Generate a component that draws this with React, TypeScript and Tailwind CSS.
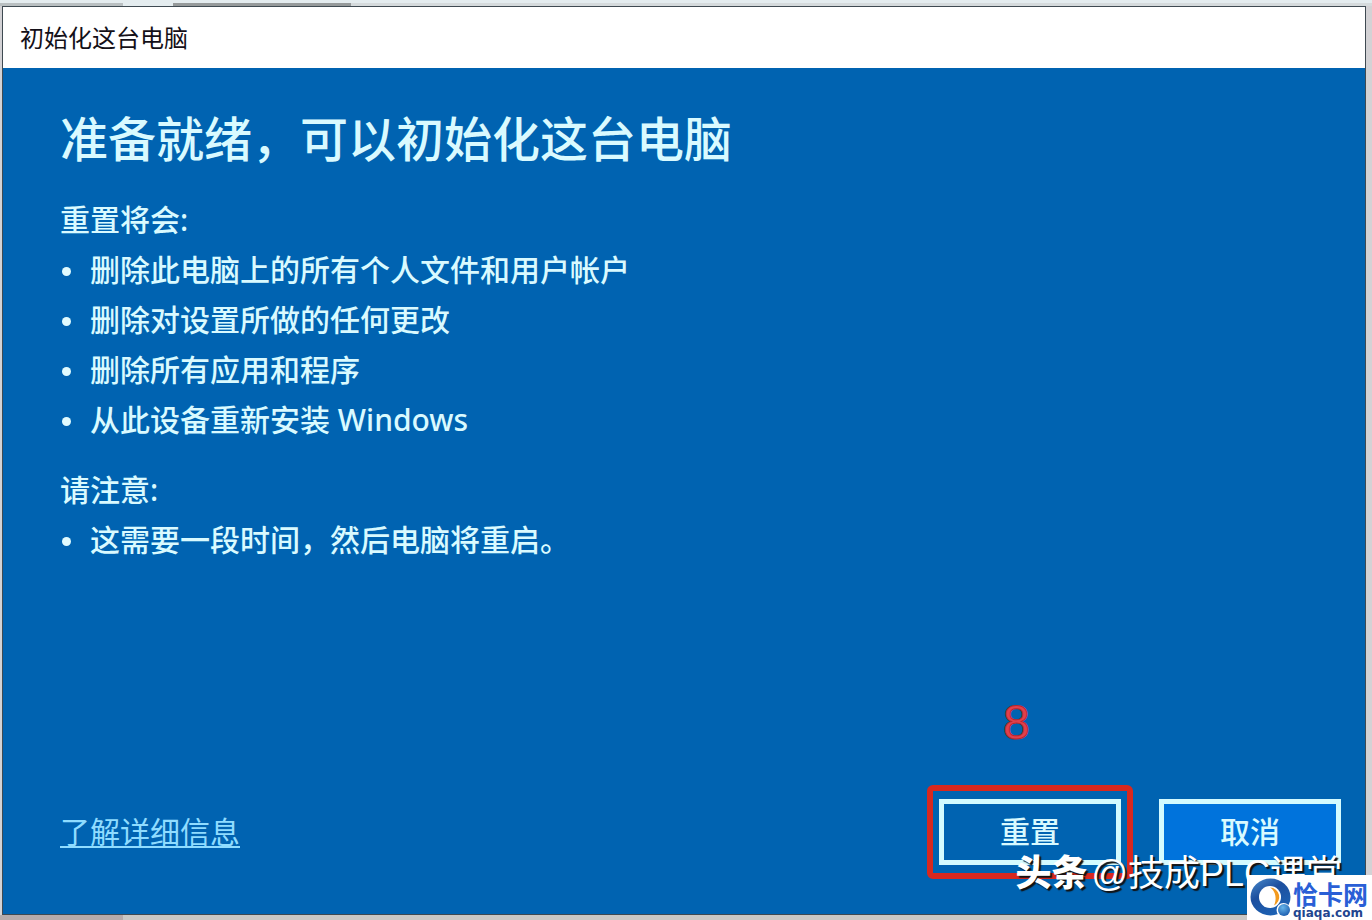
import React from 'react';

const RESET_EFFECTS = [
  '删除此电脑上的所有个人文件和用户帐户',
  '删除对设置所做的任何更改',
  '删除所有应用和程序',
  '从此设备重新安装 Windows',
];

const NOTES = ['这需要一段时间，然后电脑将重启。'];

const BulletList: React.FC<{ items: string[] }> = ({ items }) => (
  <ul>
    {items.map((item) => (
      <li key={item} className="flex items-center gap-[19px]">
        <span className="mt-0.5 ml-0.5 size-[9px] shrink-0 rounded-full bg-[#e0fbff]" />
        <span>{item}</span>
      </li>
    ))}
  </ul>
);

// Red frame and step number drawn over the reset button
const StepMark: React.FC<{ step: number }> = ({ step }) => (
  <>
    <div className="pointer-events-none absolute -inset-x-3 -inset-y-3.5 rounded-md border-6 border-[#d8281f]" />
    <span className="pointer-events-none absolute -top-25 left-16 font-['Liberation_Sans'] text-[48px] leading-[48px] text-[#e0404c] [-webkit-text-stroke:1px_#b8262b]">
      {step}
    </span>
  </>
);

const SiteLogo: React.FC = () => (
  <div className="absolute right-0 bottom-0 flex h-[45px] w-[125px] items-center gap-px bg-white pl-[3px]">
    <svg viewBox="0 0 42 40" className="h-10 w-[42px] shrink-0" aria-hidden="true">
      <defs>
        <linearGradient id="ring" x1="0" y1="0" x2="0.6" y2="1">
          <stop offset="0" stopColor="#4a8ccd" />
          <stop offset="0.45" stopColor="#1d4f9e" />
          <stop offset="1" stopColor="#1c62b4" />
        </linearGradient>
        <radialGradient id="ball" cx="0.4" cy="0.3" r="0.8">
          <stop offset="0" stopColor="#66b5ea" />
          <stop offset="1" stopColor="#1554a8" />
        </radialGradient>
      </defs>
      <ellipse cx="20.500" cy="19" rx="20" ry="18.500" fill="url(#ring)" />
      <circle cx="20" cy="19" r="11" fill="#fff" />
      <path d="M20 9.500 A9.500 9.500 0 0 1 24 27.500 C27 22 26 13 20 9.500Z" fill="#f39a1e" />
      <circle cx="33.500" cy="32" r="7" fill="#fff" />
      <circle cx="34" cy="32" r="6" fill="url(#ball)" />
    </svg>
    <div className="pt-1 whitespace-nowrap text-[#2a5fd6]">
      <div className="text-[25px] leading-[26px] font-bold">恰卡网</div>
      <div className="font-['DejaVu_Sans'] text-[12px] leading-[12px] font-bold text-[#22458f]">qiaqa.com</div>
    </div>
  </div>
);

export default function App() {
  return (
    <div className="relative flex min-h-screen flex-col bg-[#d3d2d5] pr-1.5 pl-0.5 font-['Noto_Sans','Noto_Sans_CJK_SC',sans-serif]">
      {/* edges of the windows behind the dialog */}
      <div className="-mr-1.5 -ml-0.5 flex h-1.5 items-end bg-[#e4ecef]">
        <div className="h-[3px] w-[123px] bg-[#b9bfc1]" />
        <div className="ml-[50px] h-[3px] w-[178px] bg-[#969a9b]" />
        <div className="h-[3px] flex-1 bg-[#d5dadc]" />
      </div>

      <main className="flex flex-1 flex-col border border-[#3f4a52] bg-[#0063b1] font-medium text-[#d9faff]">
        <header className="flex h-[61px] items-center bg-white pl-[17px] text-[24px] leading-[36px] font-normal text-[#141018]">
          初始化这台电脑
        </header>

        <section className="px-[57px] pt-[41px] text-[30px] leading-[50px]">
          <h1 className="mb-[26px] text-[48px] leading-[60px]">准备就绪，可以初始化这台电脑</h1>
          <h2>重置将会:</h2>
          <BulletList items={RESET_EFFECTS} />
          <h2 className="mt-5">请注意:</h2>
          <BulletList items={NOTES} />
        </section>

        <footer className="mt-auto flex items-center justify-between pr-6 pb-[49px] pl-[57px] text-[30px]">
          <a href="#" className="leading-[40px] font-normal text-[#8fdcff] underline decoration-2 underline-offset-3 [text-decoration-skip-ink:none]">
            了解详细信息
          </a>
          <div className="flex gap-[38px]">
            <div className="relative">
              <button className="h-[66px] w-[182px] border-5 border-[#d4fbff] leading-[40px]">重置</button>
              <StepMark step={8} />
            </div>
            <button className="h-[66px] w-[182px] border-5 border-[#d4fbff] bg-[#0073dc] leading-[40px]">取消</button>
          </div>
        </footer>
      </main>

      <div className="-mr-1.5 -ml-0.5 h-[5px] bg-[#c9c8c5]">
        <div className="h-full w-[123px] bg-[#b5abab]" />
      </div>

      <div className="pointer-events-none absolute right-[30px] bottom-5 flex gap-1 font-['Liberation_Sans','Noto_Sans_CJK_SC',sans-serif] text-[36px] leading-[52px] whitespace-nowrap text-white [text-shadow:2px_2px_1px_#111]">
        <span className="font-black">头条</span>
        <span>@技成PLC课堂</span>
      </div>
      <SiteLogo />
    </div>
  );
}
